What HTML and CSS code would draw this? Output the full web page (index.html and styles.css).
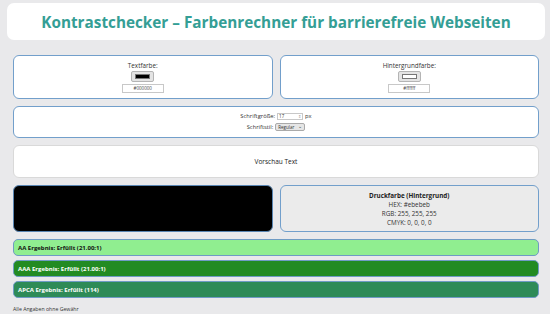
FILE: index.html
```html
<!DOCTYPE html>
<html lang="de">
<head>
<meta charset="utf-8">
<title>Kontrastchecker</title>
<link rel="stylesheet" href="styles.css">
</head>
<body>
<header class="header">
  <h1 class="title">Kontrastchecker – Farbenrechner für barrierefreie Webseiten</h1>
</header>
<main class="main">
  <div class="row">
    <section class="card picker">
      <label class="label">Textfarbe:</label>
      <div class="swatch"><div class="swatch-inner swatch-black"></div></div>
      <div class="hex-input">#000000</div>
    </section>
    <section class="card picker">
      <label class="label">Hintergrundfarbe:</label>
      <div class="swatch"><div class="swatch-inner swatch-white"></div></div>
      <div class="hex-input">#ffffff</div>
    </section>
  </div>
  <section class="card settings">
    <div class="setting-line">
      <span>Schriftgröße:</span>
      <span class="num-input"><span class="num-val">17</span><span class="spin">&#8661;</span></span>
      <span>px</span>
    </div>
    <div class="setting-line">
      <span>Schriftstil:</span>
      <span class="select">Regular <span class="chev">&#8964;</span></span>
    </div>
  </section>
  <section class="preview">Vorschau Text</section>
  <div class="row">
    <div class="card sample"></div>
    <section class="card druck">
      <div class="druck-title">Druckfarbe (Hintergrund)</div>
      <div>HEX: #ebebeb</div>
      <div>RGB: 255, 255, 255</div>
      <div>CMYK: 0, 0, 0, 0</div>
    </section>
  </div>
  <div class="results">
    <div class="bar bar-aa">AA Ergebnis: Erfüllt (21.00:1)</div>
    <div class="bar bar-aaa">AAA Ergebnis: Erfüllt (21.00:1)</div>
    <div class="bar bar-apca">APCA Ergebnis: Erfüllt (114)</div>
  </div>
  <p class="footer">Alle Angaben ohne Gewähr</p>
</main>
</body>
</html>
```
FILE: styles.css
```css
* { box-sizing: border-box; }
html, body { height: 100%; }
body {
  margin: 0;
  padding: 3px 5px 0 7px;
  background: #e9e9eb;
  font-family: "Open Sans", "Noto Sans", sans-serif;
  color: #333;
  overflow: hidden;
}
.header {
  background: #fff;
  border-radius: 7px;
  height: 37px;
  display: flex;
  align-items: center;
  justify-content: center;
}
.title {
  margin: 0;
  font-size: 15.3px;
  font-weight: 700;
  color: #349e95;
}
.main {
  margin: 15px 6px 0 6px;
  display: flex;
  flex-direction: column;
  gap: 7px;
}
.row {
  display: grid;
  grid-template-columns: 1fr 1fr;
  gap: 7px;
}
.card {
  background: #fff;
  border: 1px solid #729fcb;
  border-radius: 6px;
}
.picker {
  height: 44px;
  display: flex;
  flex-direction: column;
  align-items: center;
  padding-top: 6px;
}
.label {
  font-size: 6.3px;
  line-height: 8px;
  height: 9px;
  color: #333;
}
.swatch {
  width: 23px;
  height: 11px;
  border: 1px solid #b4b4b4;
  background: #e4e4e4;
  border-radius: 2px;
  padding: 2px 3px;
}
.swatch-inner { width: 100%; height: 100%; border: 1px solid #777; }
.swatch-black { background: #000; }
.swatch-white { background: #fff; }
.hex-input {
  margin-top: 2px;
  width: 42px;
  height: 9px;
  border: 1px solid #c8c8c8;
  background: #fff;
  font-size: 4.5px;
  line-height: 7px;
  text-align: center;
  color: #444;
}
.settings {
  height: 32px;
  display: flex;
  flex-direction: column;
  align-items: center;
  padding-top: 5px;
  gap: 3px;
  font-size: 5.8px;
}
.setting-line {
  display: flex;
  align-items: center;
  gap: 2px;
  height: 8px;
}
.num-input {
  width: 26px;
  height: 7px;
  border: 1px solid #c8c8c8;
  background: #fff;
  display: flex;
  align-items: center;
  justify-content: space-between;
  padding: 0 1px;
  font-size: 4.5px;
}
.spin { font-size: 4px; color: #999; }
.select {
  width: 30px;
  height: 8px;
  border: 1px solid #aaa;
  background: #e6e6e6;
  border-radius: 2px;
  font-size: 4.5px;
  line-height: 6px;
  padding: 0 2px;
  display: flex;
  justify-content: space-between;
}
.chev { font-size: 5px; line-height: 4px; }
.preview {
  height: 33px;
  background: #fff;
  border: 1px solid #d9d9d9;
  border-radius: 6px;
  display: flex;
  align-items: center;
  justify-content: center;
  font-size: 6.5px;
  color: #222;
}
.sample {
  height: 47px;
  background: #000;
  border-color: #5a86b3;
}
.druck {
  height: 47px;
  background: #ebebeb;
  padding-top: 5px;
  text-align: center;
  font-size: 6.3px;
  line-height: 9px;
  color: #333;
}
.druck-title { font-weight: 700; color: #222; }
.results {
  display: flex;
  flex-direction: column;
  gap: 4px;
}
.bar {
  height: 17px;
  border: 1px solid #6f9bc4;
  border-radius: 5px;
  font-size: 6px;
  font-weight: 700;
  display: flex;
  align-items: center;
  padding-left: 4px;
}
.bar-aa { background: #90ee90; color: #111; }
.bar-aaa { background: #228b22; color: #fff; }
.bar-apca { background: #2e8b57; color: #fff; }
.footer {
  margin: 0;
  font-size: 5.2px;
  line-height: 8px;
  color: #333;
}
```
